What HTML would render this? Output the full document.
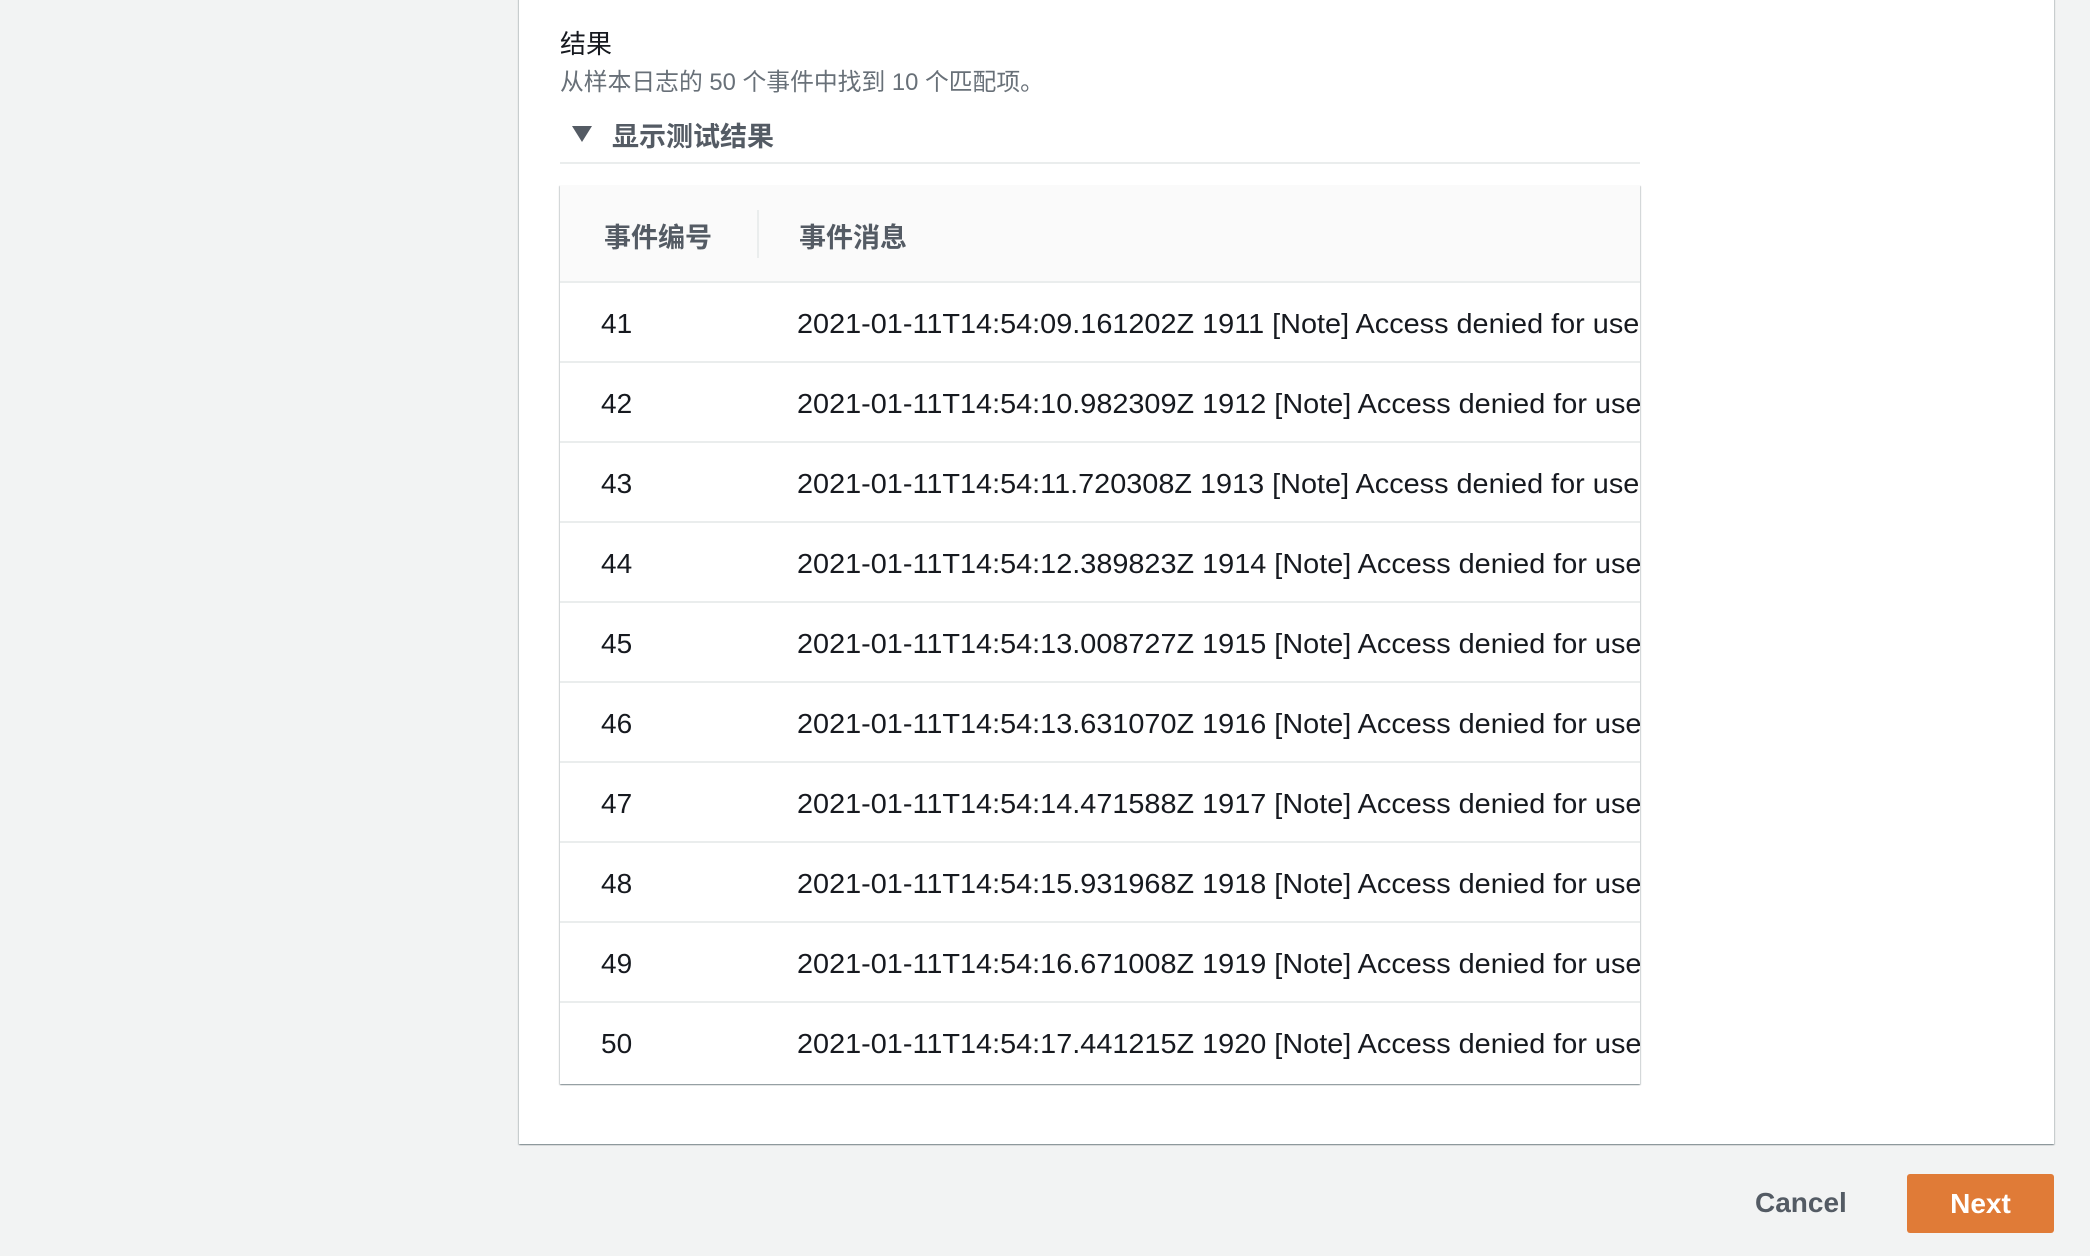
<!DOCTYPE html>
<html><head><meta charset="utf-8">
<style>
*{margin:0;padding:0;box-sizing:border-box}
body{width:2090px;height:1256px;background:#f2f3f3;position:relative;overflow:hidden;font-family:"Liberation Sans","Noto Sans CJK SC",sans-serif}
.panel{position:absolute;left:519px;top:-10px;width:1535px;height:1154px;background:#fff;box-shadow:0 1px 1px 0 rgba(0,28,36,.3),1px 1px 1px 0 rgba(0,28,36,.15),-1px 1px 1px 0 rgba(0,28,36,.15)}
.t{position:absolute;left:560px;top:24px;font-size:26px;color:#16191f}
.s{position:absolute;left:560px;top:62px;font-size:23.8px;color:#687078}
.tri{position:absolute;left:572px;top:126px;width:0;height:0;border-left:10px solid transparent;border-right:10px solid transparent;border-top:16px solid #545b64}
.x{position:absolute;left:612px;top:115px;font-size:27px;font-weight:bold;color:#545b64}
.div{position:absolute;left:560px;top:162px;width:1080px;height:2px;background:#eaeded}
.tbl{position:absolute;left:560px;top:185px;width:1080px;height:899px;background:#fff;box-shadow:0 1px 1px 0 rgba(0,28,36,.3),1px 1px 1px 0 rgba(0,28,36,.15),-1px 1px 1px 0 rgba(0,28,36,.15);overflow:hidden}
.hd{height:98px;background:#fafafa;border-bottom:2px solid #eaeded;position:relative}
.hd span{position:absolute;top:31px;font-size:27px;font-weight:bold;color:#545b64}
.sep{position:absolute;left:197px;top:25px;width:2px;height:48px;background:#eaeded}
.r{height:80px;border-bottom:2px solid #eaeded;position:relative;white-space:nowrap;color:#16191f;font-size:28px}
.r:last-child{border-bottom:none}
.r .n{position:absolute;left:41px;top:25px}
.r .m{position:absolute;left:237px;top:25px;transform:scaleX(1.03);transform-origin:0 0}
.cancel{position:absolute;left:1755px;top:1187px;font-size:28px;font-weight:bold;color:#545b64}
.next{position:absolute;left:1907px;top:1174px;width:147px;height:59px;background:#e07b37;border-radius:3px;color:#fff;font-size:28px;font-weight:bold;text-align:center;line-height:59px}
</style></head><body>
<div class="panel"></div>
<div class="t">结果</div>
<div class="s">从样本日志的 50 个事件中找到 10 个匹配项。</div>
<div class="tri"></div>
<div class="x">显示测试结果</div>
<div class="div"></div>
<div class="tbl">
<div class="hd"><span style="left:44px">事件编号</span><div class="sep"></div><span style="left:239px">事件消息</span></div>
<div class="r"><span class="n">41</span><span class="m">2021-01-11T14:54:09.161202Z 1911 [Note] Access denied for user</span></div>
<div class="r"><span class="n">42</span><span class="m">2021-01-11T14:54:10.982309Z 1912 [Note] Access denied for user</span></div>
<div class="r"><span class="n">43</span><span class="m">2021-01-11T14:54:11.720308Z 1913 [Note] Access denied for user</span></div>
<div class="r"><span class="n">44</span><span class="m">2021-01-11T14:54:12.389823Z 1914 [Note] Access denied for user</span></div>
<div class="r"><span class="n">45</span><span class="m">2021-01-11T14:54:13.008727Z 1915 [Note] Access denied for user</span></div>
<div class="r"><span class="n">46</span><span class="m">2021-01-11T14:54:13.631070Z 1916 [Note] Access denied for user</span></div>
<div class="r"><span class="n">47</span><span class="m">2021-01-11T14:54:14.471588Z 1917 [Note] Access denied for user</span></div>
<div class="r"><span class="n">48</span><span class="m">2021-01-11T14:54:15.931968Z 1918 [Note] Access denied for user</span></div>
<div class="r"><span class="n">49</span><span class="m">2021-01-11T14:54:16.671008Z 1919 [Note] Access denied for user</span></div>
<div class="r"><span class="n">50</span><span class="m">2021-01-11T14:54:17.441215Z 1920 [Note] Access denied for user</span></div>
</div>
<div class="cancel">Cancel</div>
<div class="next">Next</div>
</body></html>
